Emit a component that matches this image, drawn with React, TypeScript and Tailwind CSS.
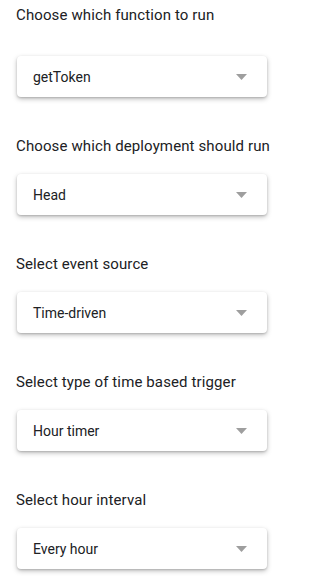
const fields = [
    { label: "Choose which function to run", value: "getToken" },
    { label: "Choose which deployment should run", value: "Head" },
    { label: "Select event source", value: "Time-driven" },
    { label: "Select type of time based trigger", value: "Hour timer" },
    { label: "Select hour interval", value: "Every hour" },
];

export default function App() {
    return (
        <div className="w-[317px] h-[587px] bg-white pt-[5px] font-['Roboto',sans-serif] text-[#202124]">
            {fields.map((field, index) => (
                <div key={index} className={index === 0 ? "" : "mt-[39px]"}>
                    {/* Label */}
                    <div className="pl-4 text-[15px] leading-5 tracking-[0.12px]">{field.label}</div>

                    {/* Dropdown */}
                    <div
                        className={`${index === 0 ? "mt-[31px]" : "mt-[18px]"} ml-[17px] w-[250px] h-[41px] rounded bg-white shadow-[0_2px_5px_rgba(0,0,0,0.25),0_1px_2px_rgba(0,0,0,0.15)] flex items-center justify-between pl-4 pr-5`}>
                        <span className="text-sm text-[#202124]">{field.value}</span>
                        <svg width="11" height="6" viewBox="0 0 11 6">
                            <path d="M0 0 L11 0 L5.5 6 Z" fill="#9e9e9e" />
                        </svg>
                    </div>
                </div>
            ))}
        </div>
    );
}
